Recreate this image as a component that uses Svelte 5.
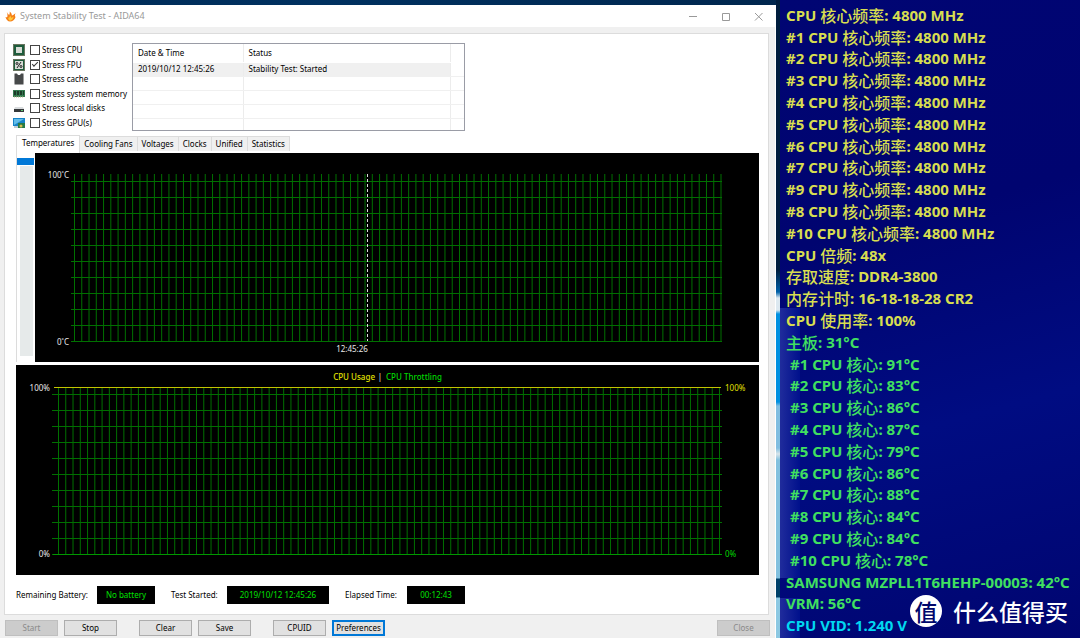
<script lang="ts">
	type Tone = 'clock' | 'temp' | 'volt';

	interface Reading {
		text: string;
		tone: Tone;
		indent?: boolean;
	}

	const stressOptions = [
		{ id: 'cpu', label: 'Stress CPU', checked: false },
		{ id: 'fpu', label: 'Stress FPU', checked: true },
		{ id: 'cache', label: 'Stress cache', checked: false },
		{ id: 'memory', label: 'Stress system memory', checked: false },
		{ id: 'disk', label: 'Stress local disks', checked: false },
		{ id: 'gpu', label: 'Stress GPU(s)', checked: false }
	];

	const tabs = ['Temperatures', 'Cooling Fans', 'Voltages', 'Clocks', 'Unified', 'Statistics'];
	let activeTab = $state('Temperatures');

	const clockOrder = [1, 2, 3, 4, 5, 6, 7, 9, 8, 10];
	const coreTemps = [91, 83, 86, 87, 79, 86, 88, 84, 84, 78];

	const readings: Reading[] = [
		{ text: 'CPU 核心频率: 4800 MHz', tone: 'clock' },
		...clockOrder.map((n): Reading => ({ text: `#${n} CPU 核心频率: 4800 MHz`, tone: 'clock' })),
		{ text: 'CPU 倍频: 48x', tone: 'clock' },
		{ text: '存取速度: DDR4-3800', tone: 'clock' },
		{ text: '内存计时: 16-18-18-28 CR2', tone: 'clock' },
		{ text: 'CPU 使用率: 100%', tone: 'clock' },
		{ text: '主板: 31°C', tone: 'temp' },
		...coreTemps.map((t, i): Reading => ({ text: `#${i + 1} CPU 核心: ${t}°C`, tone: 'temp', indent: true })),
		{ text: 'SAMSUNG MZPLL1T6HEHP-00003: 42°C', tone: 'temp' },
		{ text: 'VRM: 56°C', tone: 'temp' },
		{ text: 'CPU VID: 1.240 V', tone: 'volt' }
	];

	// Chinese runs are set lighter than the latin ones
	const runs = (text: string) => text.split(/([\u4e00-\u9fff]+)/).filter(Boolean);
	const isHan = (run: string) => /[\u4e00-\u9fff]/.test(run);

	function spread(from: number, to: number, count: number) {
		return Array.from({ length: count }, (_, i) => from + ((to - from) * i) / (count - 1));
	}

	const tempCols = spread(39.5, 686, 90);
	const tempRows = spread(28.5, 188.5, 11);
	const usageCols = spread(42.5, 703.5, 92);
	const usageRows = spread(29.5, 189.5, 11);
</script>

<div class="desktop">
	<main class="window">
		<header class="titlebar">
			<svg class="flame" viewBox="0 0 12 12" aria-hidden="true">
				<path d="M2 1C3 3 4 3.5 4.5 4.5C5 3 5.5 2 5 0.5C7 2 7.5 3.5 7.5 5C8.5 4.5 10 4 11.5 2.5C10.5 4.5 10.5 5.5 11.5 6.5C10.5 9.5 8.5 11.5 5.5 11.5C3 11.5 1.5 9.5 0.5 6.5C1.5 7 2 7 2.5 6.5C3 4.5 2.5 3 2 1Z" fill="#f57f17" />
				<path d="M3.5 7C4.5 8 5 7 5.5 5C6.5 6 6.5 7 7 7.5C8 7 8.5 6.5 9.5 6C9 8.5 7.5 10.5 5.5 10.5C4 10 3.5 8.5 3.5 7Z" fill="#ffc83a" />
			</svg>
			<h1>System Stability Test - AIDA64</h1>
			<div class="controls">
				<button aria-label="Minimize"><svg viewBox="0 0 9 9"><path d="M1 4.5H9" /></svg></button>
				<button aria-label="Maximize"><svg viewBox="0 0 9 9"><path d="M1.5 1.5H8.5V8.5H1.5Z" /></svg></button>
				<button aria-label="Close window"><svg viewBox="0 0 9 9"><path d="M1 1 8.5 8.5M8.5 1 1 8.5" /></svg></button>
			</div>
		</header>

		<section class="panel">
			<div class="top">
				<div class="options">
					{#each stressOptions as option (option.id)}
						<label>
							<svg class="device" viewBox="0 0 12 12" aria-hidden="true">
								{#if option.id === 'cpu'}
									<rect x="0.5" y="0.5" width="11" height="11" fill="#1e5c3c" stroke="#68755f" />
									<rect x="3" y="3" width="6" height="6" fill="#d8dcd6" />
								{:else if option.id === 'fpu'}
									<rect x="0.5" y="0.5" width="11" height="11" fill="#1e5c3c" stroke="#68755f" />
									<rect x="2" y="2" width="8" height="8" fill="#d8dcd6" />
									<path d="M4 9 8 3" stroke="#222" />
									<circle cx="4" cy="4.5" r="1" fill="none" stroke="#222" />
									<circle cx="8" cy="7.5" r="1" fill="none" stroke="#222" />
								{:else if option.id === 'cache'}
									<path d="M2 0.5H4L5 2H7L8 0.5H10.5V11.5H1.5V0.5Z" fill="#47494a" />
									<path d="M1 3H2M1 5H2M1 7H2M1 9H2M10 3H11M10 5H11M10 7H11M10 9H11" stroke="#999" />
								{:else if option.id === 'memory'}
									<path d="M0 2H12V9H0Z" fill="#347b50" />
									<path d="M1 3H3V7H1ZM4 3H6V7H4ZM7 3H9V7H7ZM10 3H11V7H10Z" fill="#1c3b29" />
									<path d="M1 9H11" stroke="#b9b58a" stroke-dasharray="1 1" />
								{:else if option.id === 'disk'}
									<path d="M2 5H10L11 7H1Z" fill="#d9dcde" />
									<path d="M1 7H11V10H1Z" fill="#35383a" />
									<path d="M8 8.5H10" stroke="#62c873" />
								{:else}
									<rect x="0" y="1" width="12" height="8" fill="#1683c8" />
									<path d="M1 2H11L1 8Z" fill="#62bdea" />
									<path d="M5 6H12V11H5Z" fill="#277b45" />
									<circle cx="8" cy="9" r="1.5" fill="#d6bd55" />
									<path d="M1 10H5" stroke="#8199a8" />
								{/if}
							</svg>
							<input type="checkbox" checked={option.checked} />
							<span>{option.label}</span>
						</label>
					{/each}
				</div>

				<div class="log">
					<table>
						<thead>
							<tr><th class="when">Date &amp; Time</th><th>Status</th><th class="rest"></th></tr>
						</thead>
						<tbody>
							<tr class="current"><td>2019/10/12 12:45:26</td><td>Stability Test: Started</td><td></td></tr>
							{#each { length: 4 } as _}
								<tr><td></td><td></td><td></td></tr>
							{/each}
						</tbody>
					</table>
				</div>
			</div>

			<div class="tabs" role="tablist">
				{#each tabs as tab (tab)}
					<button role="tab" class:active={tab === activeTab} aria-selected={tab === activeTab} onclick={() => (activeTab = tab)}>
						{tab}
					</button>
				{/each}
			</div>

			<div class="sheet">
				<div class="rail"><div class="marker"></div><div class="track"></div></div>
				<svg class="chart" viewBox="0 0 724 209" role="img" aria-label="Temperatures">
					<g class="grid">
						{#each tempCols as x}<path d="M{x} 21V188" />{/each}
						{#each tempRows as y}<path d="M36 {y}H687" />{/each}
					</g>
					<path class="start" d="M332.5 21V188" />
					<text x="34" y="25" text-anchor="end">100˚C</text>
					<text x="34" y="192" text-anchor="end">0˚C</text>
					<text x="317" y="199" text-anchor="middle">12:45:26</text>
				</svg>
			</div>

			<svg class="chart usage" viewBox="0 0 743 210" role="img" aria-label="CPU usage and throttling">
				<g class="grid">
					{#each usageCols as x}<path d="M{x} 23V189" />{/each}
					{#each usageRows as y}<path d="M36 {y}H706" />{/each}
				</g>
				<path class="throttle" d="M37 189.5H706" />
				<path class="load" d="M38 22.5H705" />
				<text x="34" y="26" text-anchor="end">100%</text>
				<text x="34" y="192" text-anchor="end">0%</text>
				<text class="yellow" x="709" y="26">100%</text>
				<text class="green" x="709" y="192">0%</text>
				<text class="yellow legend" x="359" y="15" text-anchor="end">CPU Usage</text>
				<text x="364" y="15" text-anchor="middle">|</text>
				<text class="green legend" x="370" y="15">CPU Throttling</text>
			</svg>

			<dl class="status">
				<div class="battery"><dt>Remaining Battery:</dt><dd>No battery</dd></div>
				<div class="started"><dt>Test Started:</dt><dd>2019/10/12 12:45:26</dd></div>
				<div class="elapsed"><dt>Elapsed Time:</dt><dd>00:12:43</dd></div>
			</dl>
		</section>

		<footer class="actions">
			<div class="pair"><button disabled>Start</button><button>Stop</button></div>
			<div class="pair"><button>Clear</button><button>Save</button></div>
			<div class="pair"><button>CPUID</button><button class="focused">Preferences</button></div>
			<button class="close" disabled>Close</button>
		</footer>
	</main>

	<aside class="side">
		<ul class="osd" lang="zh-CN">
			{#each readings as reading}
				<li class={reading.tone} class:indent={reading.indent}>
					{#each runs(reading.text) as run}<span class:han={isHan(run)}>{run}</span>{/each}
				</li>
			{/each}
		</ul>
		<div class="watermark" lang="zh-CN"><span class="seal">值</span><span>什么值得买</span></div>
	</aside>
</div>

<style>
	:global(body) {
		margin: 0;
		background: #002349;
	}

	.desktop {
		display: flex;
		min-height: 100vh;
		background: linear-gradient(90deg, #002b56, #003160 30%, #001f41);
		font-family: "Noto Sans", "Open Sans", sans-serif;
		font-size: 8px;
		line-height: 12px;
		color: #000;
	}

	button {
		font: inherit;
		color: inherit;
		padding: 0;
	}

	.window {
		box-sizing: border-box;
		flex: 1;
		min-width: 0;
		margin-top: 5px;
		display: flex;
		flex-direction: column;
		background: #f0f0f0;
		border-right: 1px solid #fff;
	}

	.titlebar {
		display: flex;
		align-items: center;
		gap: 4px;
		height: 22px;
		padding: 0 5px;
		background: #fff;
		color: #999;
	}

	.flame {
		width: 11px;
		height: 11px;
	}

	h1 {
		margin: 0;
		font-size: 9px;
		font-weight: 400;
	}

	.controls {
		display: flex;
		margin-left: auto;
	}

	.controls button {
		display: flex;
		align-items: center;
		justify-content: center;
		width: 33px;
		height: 22px;
		margin: 0;
		border: 0;
		background: none;
	}

	.controls button:last-child {
		margin-right: -5px;
	}

	.controls svg {
		width: 9px;
		height: 9px;
		fill: none;
		stroke: #999;
	}

	.panel {
		margin: 6px 6px 0 4px;
		padding: 9px 9px 10px 11px;
		border: 1px solid #dcdcdc;
		background: #fff;
	}

	.top {
		display: flex;
		height: 88px;
		margin-left: -3px;
	}

	.options {
		box-sizing: border-box;
		display: grid;
		grid-auto-rows: 1fr;
		width: 119px;
		padding-bottom: 1px;
	}

	.options label {
		display: flex;
		align-items: center;
		white-space: nowrap;
	}

	.device {
		width: 12px;
		height: 12px;
		margin-right: 5px;
	}

	.options input {
		appearance: none;
		width: 10px;
		height: 10px;
		margin: 0 2px 0 0;
		border: 1px solid #444;
		background: #fff;
	}

	.options input:checked {
		display: grid;
		place-items: center;
	}

	.options input:checked::after {
		content: "";
		width: 5px;
		height: 2px;
		margin-bottom: 2px;
		border: solid #333;
		border-width: 0 0 1px 1px;
		transform: rotate(-45deg);
	}

	.log {
		box-sizing: border-box;
		width: 333px;
		border: 1px solid #9a9ca6;
		overflow: hidden;
	}

	table {
		width: 100%;
		table-layout: fixed;
		border-collapse: collapse;
	}

	th,
	td {
		box-sizing: border-box;
		height: 14px;
		padding: 0 5px;
		border-right: 1px solid #ececec;
		border-bottom: 1px solid #f0f0f0;
		font-weight: 400;
		text-align: left;
		line-height: 12px;
	}

	th {
		height: 18px;
		padding-top: 1px;
		border-bottom-color: #fff;
	}

	th.when {
		width: 110px;
	}

	th.rest {
		width: 14px;
	}

	th:last-child,
	td:last-child {
		border-right: 0;
		padding: 0;
	}

	.current td:not(:last-child) {
		background: #f0f0f0;
	}

	.tabs {
		display: flex;
		align-items: flex-end;
		height: 18px;
		margin-top: 4px;
	}

	.tabs button {
		height: 15px;
		padding: 0 4px;
		margin-bottom: 2px;
		border: 1px solid #dcdcdc;
		border-left: 0;
		border-bottom: 0;
		background: #f0f0f0;
		line-height: 14px;
	}

	.tabs button.active {
		height: 18px;
		margin-bottom: 0;
		padding: 0 5px 3px;
		border-left: 1px solid #dcdcdc;
		background: #fff;
	}

	.sheet {
		display: flex;
	}

	.rail {
		box-sizing: border-box;
		display: flex;
		flex-direction: column;
		width: 19px;
		padding: 5px 1px 6px 0;
		border-left: 1px solid #dcdcdc;
	}

	.marker {
		height: 7px;
		background: #0078d7;
	}

	.track {
		flex: 1;
		margin: 1px 1px 0 3px;
		background: #e6eaea;
	}

	.chart {
		flex: 1;
		display: block;
		min-width: 0;
		background: #000;
	}

	.usage {
		width: 100%;
		margin-top: 3px;
	}

	.chart text {
		fill: #e8e8e8;
	}

	.chart .yellow {
		fill: #e0e000;
	}

	.chart .green {
		fill: #00d800;
	}

	.chart .legend {
		font-weight: 500;
	}

	.grid path {
		stroke: #007000;
	}

	.start {
		stroke: #ddd;
		stroke-dasharray: 3 2;
	}

	.throttle {
		stroke: #009800;
	}

	.load {
		stroke: #c4c400;
	}

	.status {
		display: flex;
		gap: 16px;
		margin: 11px 0 0;
	}

	.status div {
		display: flex;
		line-height: 18px;
		white-space: nowrap;
	}

	.status dd {
		width: 58px;
		margin: 0;
		background: #000;
		color: #00e000;
		text-align: center;
	}

	.battery dt {
		width: 81px;
	}

	.started dt {
		width: 56px;
	}

	.started dd {
		width: 102px;
	}

	.elapsed dt {
		width: 62px;
	}

	.actions {
		display: flex;
		align-items: center;
		gap: 22px;
		padding: 5px 5px 2px;
	}

	.pair {
		display: flex;
		gap: 6px;
	}

	.actions button {
		box-sizing: border-box;
		width: 53px;
		height: 16px;
		border: 1px solid #adadad;
		background: #e1e1e1;
		line-height: 14px;
	}

	.actions button:disabled {
		border-color: #bfbfbf;
		background: #ccc;
		color: #8a8a8a;
	}

	.actions .focused {
		border: 2px solid #0078d7;
		line-height: 12px;
	}

	.actions .close {
		margin-left: auto;
	}

	.side {
		position: relative;
		box-sizing: border-box;
		display: flex;
		width: 304px;
		padding-left: 4px;
		background: linear-gradient(#001d3d 0 270px, #0060a8 292px, #dce8f0 298px 310px, #0090e0 314px 402px, #80bde0 406px 448px, #d8e4ea 454px, #82c0de 460px 578px, #004068 579px 597px, #8cc8e2 598px);
	}

	.osd {
		flex: 1;
		display: grid;
		grid-auto-rows: 1fr;
		margin: 0;
		padding: 4px 0 2px 6px;
		list-style: none;
		background:
			linear-gradient(90deg, #202c9c, #00108c) 0 308px / 20px 270px no-repeat,
			linear-gradient(90deg, #202c9c, #00108c) 0 598px / 20px 100px no-repeat,
			linear-gradient(165deg, #000573, #000470 35%, #000c82 65%, #000570);
		font-family: "Noto Sans", "Noto Sans CJK SC", sans-serif;
		font-size: 15px;
		font-weight: 700;
		line-height: 20px;
		white-space: nowrap;
	}

	.osd li {
		display: flex;
		align-items: center;
		white-space: pre;
	}

	.osd .indent {
		padding-left: 4px;
	}

	.han {
		font-family: "Noto Sans CJK SC", sans-serif;
		font-size: 16px;
		font-weight: 500;
	}

	.clock {
		color: #d8de50;
	}

	.temp {
		color: #40e060;
	}

	.volt {
		color: #00d8f0;
	}

	.watermark {
		position: absolute;
		right: 12px;
		bottom: 11px;
		display: flex;
		align-items: center;
		gap: 11px;
		font-family: "Noto Sans CJK SC", sans-serif;
		font-size: 23px;
		font-weight: 500;
		line-height: 32px;
		color: #fff;
	}

	.seal {
		width: 32px;
		height: 32px;
		border-radius: 50%;
		background: #fff;
		color: #00086c;
		text-align: center;
	}
</style>
